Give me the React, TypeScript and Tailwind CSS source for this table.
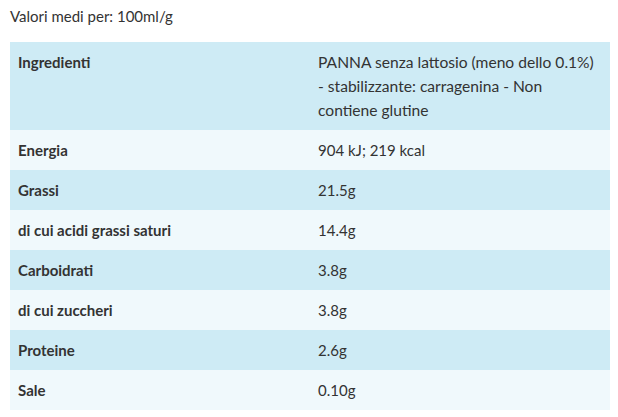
const rows = [
  { label: "Ingredienti", value: "PANNA senza lattosio (meno dello 0.1%) - stabilizzante: carragenina - Non contiene glutine" },
  { label: "Energia", value: "904 kJ; 219 kcal" },
  { label: "Grassi", value: "21.5g" },
  { label: "di cui acidi grassi saturi", value: "14.4g" },
  { label: "Carboidrati", value: "3.8g" },
  { label: "di cui zuccheri", value: "3.8g" },
  { label: "Proteine", value: "2.6g" },
  { label: "Sale", value: "0.10g" },
];

export default function App() {
  return (
    <div className="min-h-screen bg-white px-[10px] pt-[4px] font-['Lato','Noto_Sans',sans-serif] text-[15px] leading-6 text-[#333]">
      <p className="h-[24px]">Valori medi per: 100ml/g</p>
      <table className="mt-[14px] w-[600px] table-fixed border-collapse">
        <tbody>
          {rows.map((r, i) => (
            <tr key={r.label} className={i % 2 === 0 ? "bg-[#ceebf5]" : "bg-[#f0f9fc]"}>
              <td className={`w-[300px] px-2 align-top font-bold ${i === 0 ? "pt-2 pb-[32px]" : "py-2"}`}>
                {r.label}
              </td>
              <td className={`w-[300px] px-2 py-2 align-top ${i === 0 ? "text-[15.6px]" : ""}`}>{r.value}</td>
            </tr>
          ))}
        </tbody>
      </table>
    </div>
  );
}
